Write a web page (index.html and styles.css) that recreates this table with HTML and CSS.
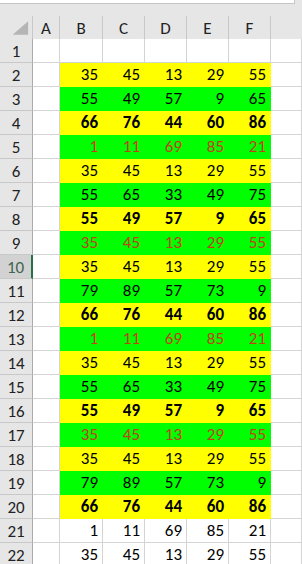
FILE: index.html
```html
<!DOCTYPE html>
<html>
<head>
<meta charset="utf-8">
<link rel="stylesheet" href="styles.css">
</head>
<body>
<div class="fbar"></div>
<div class="sheet">
  <div class="row head">
    <div class="rh corner"><svg width="33" height="23" viewBox="0 0 33 23"><polygon points="13,19 29,19 29,5" fill="#b5b5b5"/></svg></div>
    <div class="ch">A</div><div class="ch">B</div><div class="ch">C</div><div class="ch">D</div><div class="ch">E</div><div class="ch">F</div><div class="ch last"></div>
  </div>
  <div class="row"><div class="rh">1</div><div class="c"></div><div class="c v"></div><div class="c v"></div><div class="c v"></div><div class="c v"></div><div class="c v"></div><div class="c"></div></div>
  <div class="row y"><div class="rh">2</div><div class="c"></div><div class="c v">35</div><div class="c v">45</div><div class="c v">13</div><div class="c v">29</div><div class="c v">55</div><div class="c"></div></div>
  <div class="row g"><div class="rh">3</div><div class="c"></div><div class="c v">55</div><div class="c v">49</div><div class="c v">57</div><div class="c v">9</div><div class="c v">65</div><div class="c"></div></div>
  <div class="row y b"><div class="rh">4</div><div class="c"></div><div class="c v">66</div><div class="c v">76</div><div class="c v">44</div><div class="c v">60</div><div class="c v">86</div><div class="c"></div></div>
  <div class="row g r"><div class="rh">5</div><div class="c"></div><div class="c v">1</div><div class="c v">11</div><div class="c v">69</div><div class="c v">85</div><div class="c v">21</div><div class="c"></div></div>
  <div class="row y"><div class="rh">6</div><div class="c"></div><div class="c v">35</div><div class="c v">45</div><div class="c v">13</div><div class="c v">29</div><div class="c v">55</div><div class="c"></div></div>
  <div class="row g"><div class="rh">7</div><div class="c"></div><div class="c v">55</div><div class="c v">65</div><div class="c v">33</div><div class="c v">49</div><div class="c v">75</div><div class="c"></div></div>
  <div class="row y b"><div class="rh">8</div><div class="c"></div><div class="c v">55</div><div class="c v">49</div><div class="c v">57</div><div class="c v">9</div><div class="c v">65</div><div class="c"></div></div>
  <div class="row g r"><div class="rh">9</div><div class="c"></div><div class="c v">35</div><div class="c v">45</div><div class="c v">13</div><div class="c v">29</div><div class="c v">55</div><div class="c"></div></div>
  <div class="row y"><div class="rh active">10</div><div class="c"></div><div class="c v">35</div><div class="c v">45</div><div class="c v">13</div><div class="c v">29</div><div class="c v">55</div><div class="c"></div></div>
  <div class="row g"><div class="rh">11</div><div class="c"></div><div class="c v">79</div><div class="c v">89</div><div class="c v">57</div><div class="c v">73</div><div class="c v">9</div><div class="c"></div></div>
  <div class="row y b"><div class="rh">12</div><div class="c"></div><div class="c v">66</div><div class="c v">76</div><div class="c v">44</div><div class="c v">60</div><div class="c v">86</div><div class="c"></div></div>
  <div class="row g r"><div class="rh">13</div><div class="c"></div><div class="c v">1</div><div class="c v">11</div><div class="c v">69</div><div class="c v">85</div><div class="c v">21</div><div class="c"></div></div>
  <div class="row y"><div class="rh">14</div><div class="c"></div><div class="c v">35</div><div class="c v">45</div><div class="c v">13</div><div class="c v">29</div><div class="c v">55</div><div class="c"></div></div>
  <div class="row g"><div class="rh">15</div><div class="c"></div><div class="c v">55</div><div class="c v">65</div><div class="c v">33</div><div class="c v">49</div><div class="c v">75</div><div class="c"></div></div>
  <div class="row y b"><div class="rh">16</div><div class="c"></div><div class="c v">55</div><div class="c v">49</div><div class="c v">57</div><div class="c v">9</div><div class="c v">65</div><div class="c"></div></div>
  <div class="row g r"><div class="rh">17</div><div class="c"></div><div class="c v">35</div><div class="c v">45</div><div class="c v">13</div><div class="c v">29</div><div class="c v">55</div><div class="c"></div></div>
  <div class="row y"><div class="rh">18</div><div class="c"></div><div class="c v">35</div><div class="c v">45</div><div class="c v">13</div><div class="c v">29</div><div class="c v">55</div><div class="c"></div></div>
  <div class="row g"><div class="rh">19</div><div class="c"></div><div class="c v">79</div><div class="c v">89</div><div class="c v">57</div><div class="c v">73</div><div class="c v">9</div><div class="c"></div></div>
  <div class="row y b"><div class="rh">20</div><div class="c"></div><div class="c v">66</div><div class="c v">76</div><div class="c v">44</div><div class="c v">60</div><div class="c v">86</div><div class="c"></div></div>
  <div class="row"><div class="rh">21</div><div class="c"></div><div class="c v">1</div><div class="c v">11</div><div class="c v">69</div><div class="c v">85</div><div class="c v">21</div><div class="c"></div></div>
  <div class="row"><div class="rh">22</div><div class="c"></div><div class="c v">35</div><div class="c v">45</div><div class="c v">13</div><div class="c v">29</div><div class="c v">55</div><div class="c"></div></div>
</div>
</body>
</html>
```
FILE: styles.css
```css
* { box-sizing: border-box; }
html, body {
  margin: 0;
  padding: 0;
  background: #e6e6e6;
  overflow: hidden;
}
body {
  width: 302px;
  height: 564px;
  font-family: Carlito, Lato, "Liberation Sans", sans-serif;
  font-size: 17px;
  color: #000;
}
.fbar {
  width: 295px;
  height: 4px;
  background: #fff;
  border-right: 1px solid #c6c6c6;
  border-bottom: 1px solid #c6c6c6;
}
.sheet {
  margin-top: 12px;
}
.row {
  display: grid;
  grid-template-columns: 33px 27px 43px 42px 42px 42px 42px 1fr;
  height: 24px;
}
.row.head {
  height: 23px;
}
.ch, .rh {
  background: #e6e6e6;
  color: #222;
  display: flex;
  align-items: center;
  justify-content: center;
  border-right: 1px solid #c8c8c8;
  border-bottom: 1px solid #ababab;
  line-height: 18px;
  padding-top: 2px;
  font-size: 17px;
}
.ch.last { border-right: none; }
.rh {
  border-bottom: 1px solid #c8c8c8;
  border-right: 1px solid #ababab;
  padding-top: 2px;
}
.rh.corner {
  padding: 0;
  border-right: 1px solid #c8c8c8;
  border-bottom: 1px solid #ababab;
}
.rh.corner svg { display: block; }
.rh.active {
  background: #d2d2d2;
  color: #3f6450;
  border-right: 2px solid #217346;
}
.c {
  background: #fff;
  border-right: 1px solid #d4d4d4;
  border-bottom: 1px solid #d4d4d4;
}
.v {
  display: flex;
  justify-content: flex-end;
  align-items: flex-end;
  padding: 0 4px 1px 0;
  line-height: 20px;
}
.row.y .v { background: #ffff00; border-color: #ffff00; }
.row.g .v { background: #00ff00; border-color: #00ff00; }
.row.b .v { font-weight: bold; }
.row.r .v { color: #c0421a; }
```
